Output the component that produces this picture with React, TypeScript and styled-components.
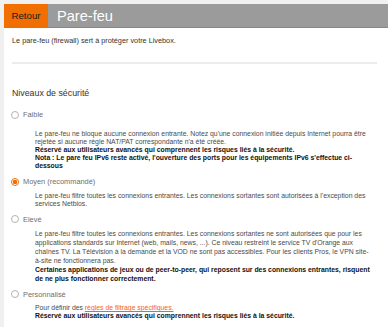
import styled, { createGlobalStyle } from "styled-components";

const GlobalStyle = createGlobalStyle`
  html, body {
    margin: 0;
    padding: 0;
    background: #f0f0f0;
  }
  body {
    padding: 4px 0 0 4px;
    font-family: Arial, "Liberation Sans", Helvetica, sans-serif;
  }
`;

type Level = {
  id: string;
  label: string;
  checked?: boolean;
  spaced?: boolean;
  loose?: boolean;
  body: React.ReactNode;
};

function getLevels(): Level[] {
  return [
    {
      id: "low",
      label: "Faible",
      spaced: true,
      body: (
        <>
          Le pare-feu ne bloque aucune connexion entrante. Notez qu'une connexion
          initiée depuis Internet pourra être rejetée si aucune règle NAT/PAT
          correspondante n'a été créée.
          <Strong>Réservé aux utilisateurs avancés qui comprennent les risques liés à la sécurité.</Strong>
          <Strong>
            Nota : Le pare feu IPv6 reste activé, l'ouverture des ports pour les
            équipements IPv6 s'effectue ci-dessous
          </Strong>
        </>
      ),
    },
    {
      id: "medium",
      label: "Moyen (recommandé)",
      checked: true,
      body: (
        <>
          Le pare-feu filtre toutes les connexions entrantes. Les connexions
          sortantes sont autorisées à l'exception des services Netbios.
        </>
      ),
    },
    {
      id: "high",
      label: "Elevé",
      loose: true,
      body: (
        <>
          Le pare-feu filtre toutes les connexions entrantes. Les connexions
          sortantes ne sont autorisées que pour les applications standards sur
          Internet (web, mails, news, ...). Ce niveau restreint le service TV
          d'Orange aux
          <br />
          chaînes TV. La Télévision à la demande et la VOD ne sont pas
          accessibles. Pour les clients Pros, le VPN site-à-site ne
          fonctionnera pas.
          <Strong>
            Certaines applications de jeux ou de peer-to-peer, qui reposent sur
            des connexions entrantes, risquent de ne plus fonctionner
            correctement.
          </Strong>
        </>
      ),
    },
    {
      id: "custom",
      label: "Personnalisé",
      body: (
        <>
          Pour définir des <Link href="#">règles de filtrage spécifiques.</Link>
          <Strong>Réservé aux utilisateurs avancés qui comprennent les risques liés à la sécurité.</Strong>
        </>
      ),
    },
  ];
}

function App() {
  const levels = getLevels();
  return (
    <>
      <GlobalStyle />
      <Panel>
        <Header>
          <BackButton>Retour</BackButton>
          <Title>Pare-feu</Title>
        </Header>
        <Content>
          <Intro>Le pare-feu (firewall) sert à protéger votre Livebox.</Intro>
          <Divider />
          <SectionTitle>Niveaux de sécurité</SectionTitle>
          <Options>
            {levels.map((level) => (
              <Option key={level.id}>
                <OptionHead>
                  <Radio $checked={!!level.checked} />
                  <OptionLabel>{level.label}</OptionLabel>
                </OptionHead>
                <OptionText $spaced={!!level.spaced} $loose={!!level.loose}>
                  {level.body}
                </OptionText>
              </Option>
            ))}
          </Options>
        </Content>
      </Panel>
    </>
  );
}

export default App;

const Panel = styled.div`
  background: #fff;
  min-height: calc(100vh - 4px);
`;

const Header = styled.div`
  display: flex;
  align-items: stretch;
  height: 23px;
  background: #9b9b9b;
  border-bottom: 1px solid #878787;
`;

const BackButton = styled.div`
  width: 44px;
  display: flex;
  align-items: center;
  justify-content: center;
  background: #f16e00;
  color: #1a1a1a;
  font-size: 9.7px;
`;

const Title = styled.h1`
  margin: 0 0 0 9px;
  display: flex;
  align-items: center;
  color: #fff;
  font-size: 14.6px;
  font-weight: normal;
`;

const Content = styled.div`
  padding: 0 11px 0 8px;
`;

const Intro = styled.p`
  margin: 9px 0 0;
  font-size: 7.3px;
  line-height: 8.4px;
  color: #333;
`;

const Divider = styled.hr`
  margin: 17px 0 0;
  border: 0;
  border-top: 2px solid #ececec;
`;

const SectionTitle = styled.h2`
  margin: 24px 0 0;
  font-size: 8.8px;
  line-height: 11px;
  font-weight: normal;
  color: #333;
`;

const Options = styled.div`
  display: flex;
  flex-direction: column;
  gap: 6.2px;
  margin-top: 10.5px;
`;

const Option = styled.div`
  display: flex;
  flex-direction: column;
`;

const OptionHead = styled.div`
  display: flex;
  align-items: center;
  gap: 4.5px;
  height: 10px;
`;

const Radio = styled.span<{ $checked: boolean }>`
  box-sizing: border-box;
  width: 8px;
  height: 8px;
  border-radius: 50%;
  border: 1px solid ${(p) => (p.$checked ? "#f16e00" : "#b3b3b3")};
  background: ${(p) =>
    p.$checked ? "radial-gradient(circle, #f16e00 0 2px, #fff 2.4px)" : "#fff"};
  margin-left: -1.5px;
`;

const OptionLabel = styled.span`
  font-size: 7.4px;
  color: #6e6e6e;
`;

const OptionText = styled.div<{ $spaced: boolean; $loose: boolean }>`
  margin: ${(p) => (p.$spaced ? "9.6px" : "4.9px")} 4px 0 23px;
  font-size: 6.85px;
  line-height: ${(p) => (p.$loose ? "9px" : "8.2px")};
  color: #4a4a4a;
`;

const Strong = styled.strong`
  display: block;
  color: #111;
`;

const Link = styled.a`
  color: #f0622a;
  text-decoration: underline;
`;
